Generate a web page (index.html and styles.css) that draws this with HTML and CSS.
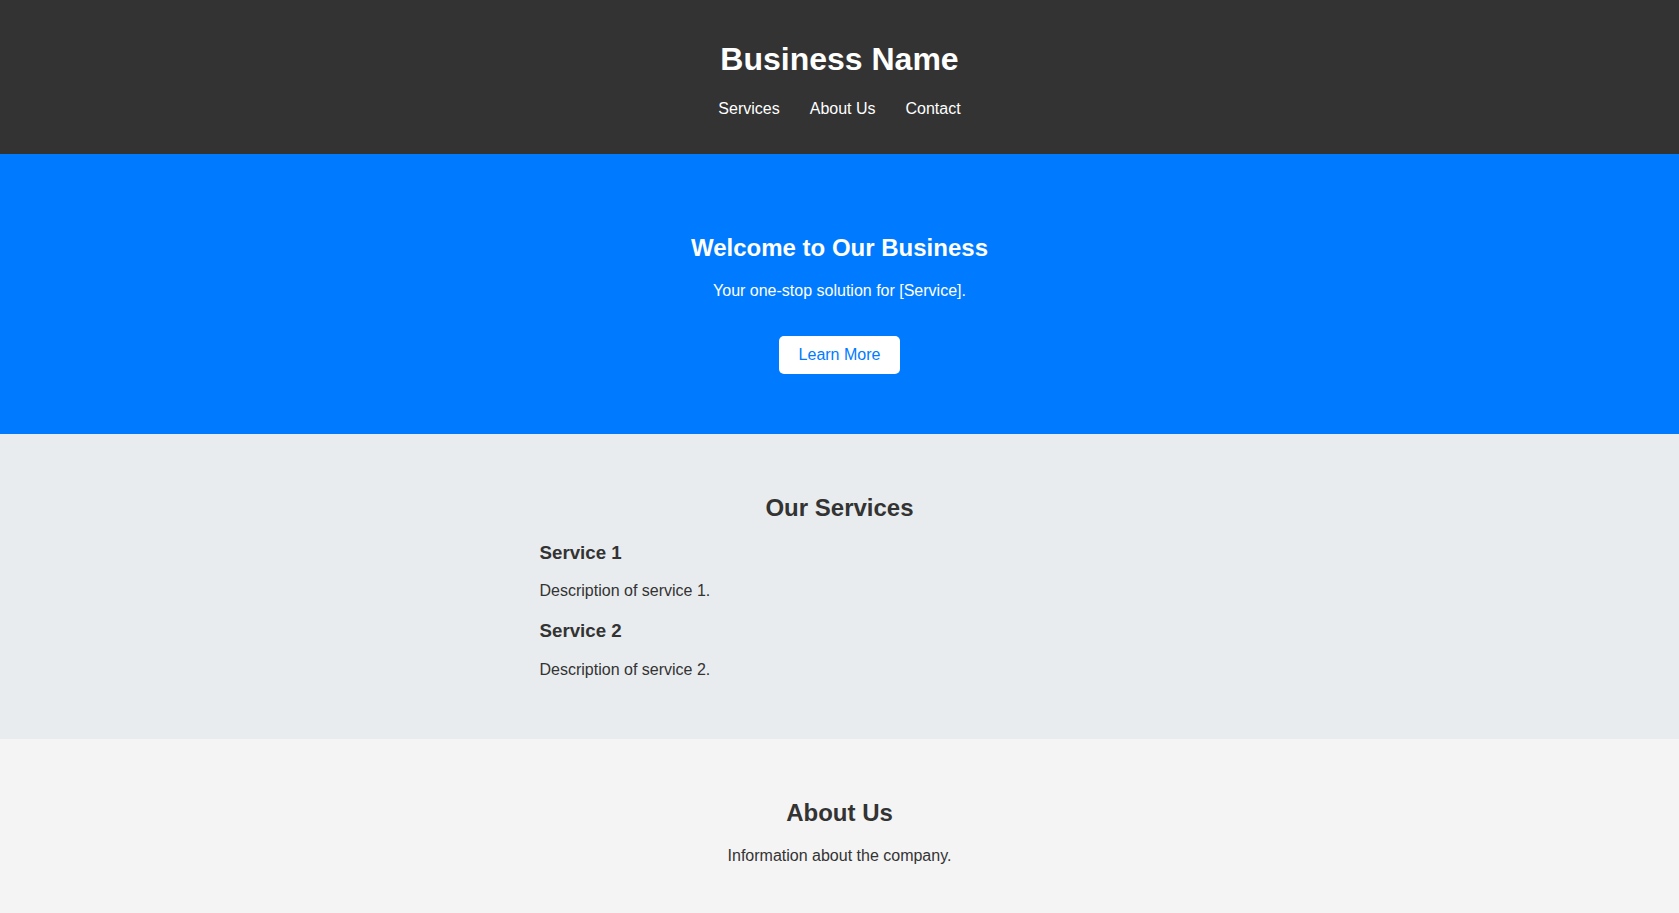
FILE: index.html
```html
<!DOCTYPE html>
<html lang="en">
<head>
<meta charset="utf-8">
<title>Business Name</title>
<link rel="stylesheet" href="styles.css">
</head>
<body>
<header class="site-header">
  <h1 class="site-title">Business Name</h1>
  <nav>
    <ul class="nav-list">
      <li><a href="#services">Services</a></li>
      <li><a href="#about">About Us</a></li>
      <li><a href="#contact">Contact</a></li>
    </ul>
  </nav>
</header>
<section class="hero">
  <h2>Welcome to Our Business</h2>
  <p>Your one-stop solution for [Service].</p>
  <a class="btn" href="#services">Learn More</a>
</section>
<section class="services" id="services">
  <div class="container">
    <h2>Our Services</h2>
    <div class="service">
      <h3>Service 1</h3>
      <p>Description of service 1.</p>
    </div>
    <div class="service">
      <h3>Service 2</h3>
      <p>Description of service 2.</p>
    </div>
  </div>
</section>
<section class="about" id="about">
  <div class="container">
    <h2>About Us</h2>
    <p>Information about the company.</p>
  </div>
</section>
</body>
</html>
```
FILE: styles.css
```css
body {
  margin: 0;
  font-family: "Liberation Sans", Arial, sans-serif;
  color: #333;
  background: #f4f4f4;
}
.site-header {
  background: #333;
  color: #fff;
  padding: 20px;
  text-align: center;
}
.site-title {
  font-size: 32px;
  margin: 21.44px 0;
}
.nav-list {
  list-style: none;
  padding: 0;
  margin: 16px 0;
  display: flex;
  justify-content: center;
  gap: 30px;
}
.nav-list a {
  color: #fff;
  text-decoration: none;
}
.hero {
  background: #007bff;
  color: #fff;
  text-align: center;
  padding: 60px 20px;
}
.hero h2 {
  font-size: 24px;
  margin: 19.92px 0;
}
.hero p {
  margin: 16px 0;
}
.btn {
  display: inline-block;
  margin-top: 20px;
  padding: 10px 20px;
  background: #fff;
  color: #007bff;
  text-decoration: none;
  border-radius: 5px;
}
.services {
  background: #e9ecef;
  padding: 40px 20px;
}
.about {
  background: #f4f4f4;
  padding: 40px 20px;
  text-align: center;
}
.container {
  max-width: 600px;
  margin: 0 auto;
}
.services h2 {
  text-align: center;
}
h2 {
  font-size: 24px;
  margin: 19.92px 0;
}
h3 {
  font-size: 18.72px;
  margin: 18.72px 0;
}
p {
  margin: 16px 0;
}
.service {
  margin-bottom: 20px;
}
```
